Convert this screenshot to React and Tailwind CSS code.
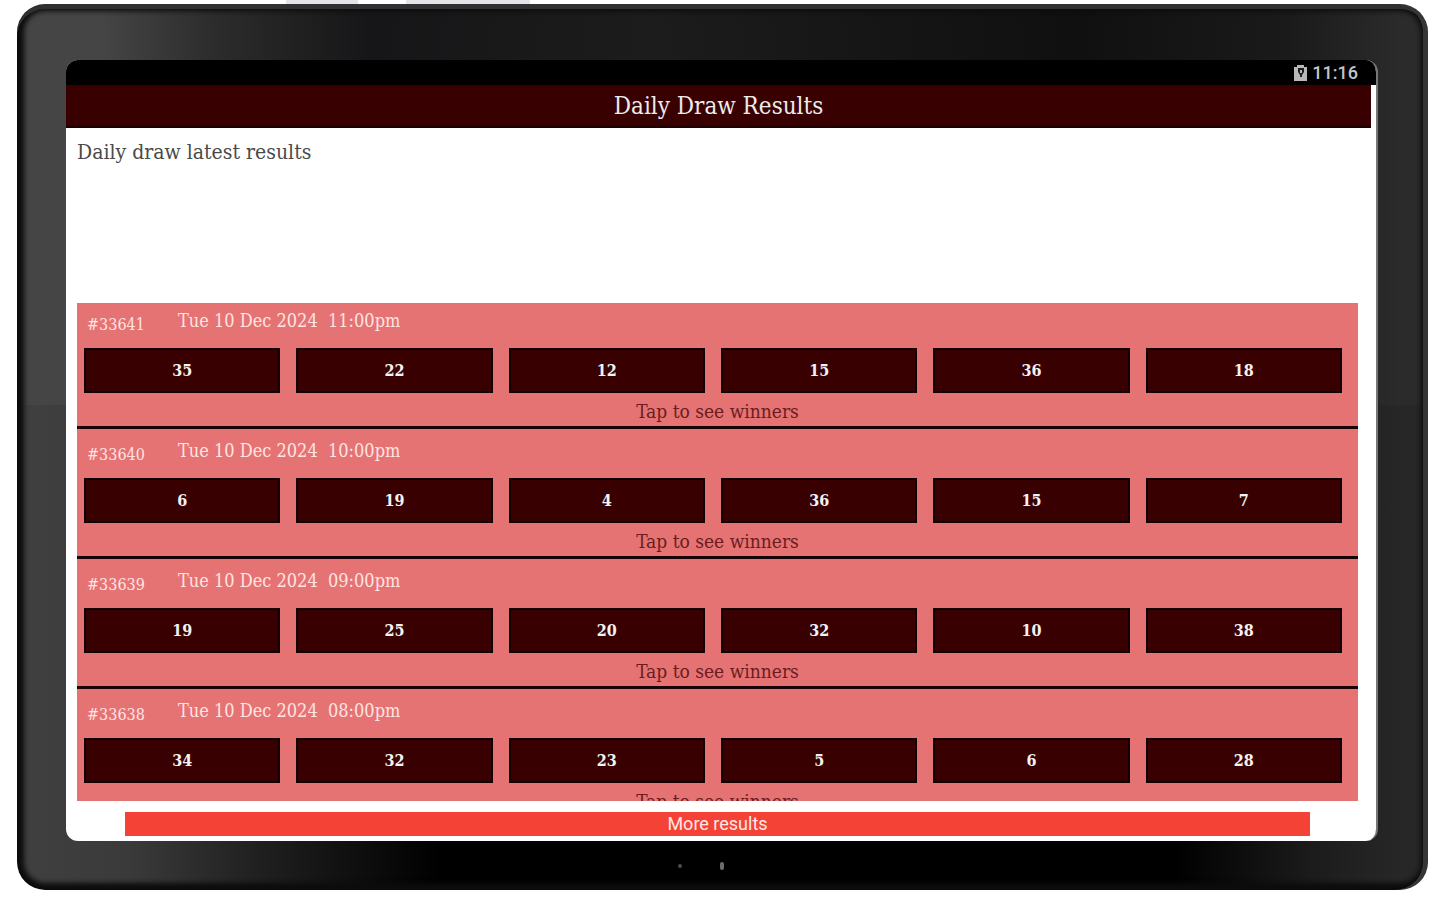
import { useState } from "react";

const draws = [
	{
		id: 33641,
		date: "Tue 10 Dec 2024",
		time: "11:00pm",
		numbers: [35, 22, 12, 15, 36, 18],
	},
	{
		id: 33640,
		date: "Tue 10 Dec 2024",
		time: "10:00pm",
		numbers: [6, 19, 4, 36, 15, 7],
	},
	{
		id: 33639,
		date: "Tue 10 Dec 2024",
		time: "09:00pm",
		numbers: [19, 25, 20, 32, 10, 38],
	},
	{
		id: 33638,
		date: "Tue 10 Dec 2024",
		time: "08:00pm",
		numbers: [34, 32, 23, 5, 6, 28],
	},
];

function BatteryIcon() {
	return (
		<svg width="13" height="16" viewBox="0 0 13 16" aria-hidden="true">
			<path d="M3 0h7v2h3v14H0V2h3z" fill="#b8b8b8" />
			<path d="M4 3h6v4L8 10v2H6v-2L4 7z" fill="#1c1c1c" />
			<path d="M6 5h2v3H6z" fill="#b8b8b8" />
		</svg>
	);
}

function StatusBar() {
	return (
		<div className="flex h-[25px] shrink-0 items-center justify-end gap-[5px] bg-black pr-[18px] text-[#c4c4c4]">
			<BatteryIcon />
			<span className="font-['Roboto',sans-serif] text-lg font-medium leading-6">
				11:16
			</span>
		</div>
	);
}

function DrawRow({ draw, open, onToggle }) {
	return (
		<li className="h-[130px] shrink-0 border-b-3 border-[#170406] first:-mt-1">
			<div className="flex h-[49px] items-start pl-[10px] pt-2 text-[#ffe4e2]">
				<span className="w-[91px] pt-1 text-base leading-7">#{draw.id}</span>
				<span className="whitespace-pre text-lg leading-7">
					{draw.date}
					{"  "}
					{draw.time}
				</span>
			</div>
			<div className="grid grid-cols-6 gap-4 pl-[7px] pr-4">
				{draw.numbers.map((number, i) => (
					<div
						key={i}
						className="flex h-[45px] items-center justify-center border-2 border-[#100000] bg-[#380000] text-base font-bold text-[#f2f2f2]"
					>
						{number}
					</div>
				))}
			</div>
			<button
				onClick={onToggle}
				aria-expanded={open}
				className="block h-[33px] w-full text-center text-[19px] leading-9 text-[#6b1c20]"
			>
				Tap to see winners
			</button>
		</li>
	);
}

function App() {
	const [openId, setOpenId] = useState(null);

	return (
		<div className="flex h-screen flex-col bg-white px-[17px] pb-[10px] font-['DejaVu_Serif_Condensed','DejaVu_Serif',serif]">
			{/* Hardware buttons */}
			<div className="flex h-1 shrink-0 gap-12 pl-[269px]">
				<span className="w-[72px] bg-[#e4e4e8]" />
				<span className="w-[124px] bg-[#e4e4e8]" />
			</div>

			{/* Tablet body */}
			<div className="flex min-h-0 flex-1 flex-col rounded-[28px] bg-[linear-gradient(90deg,#454545_0%,#454545_6%,#2c2c2c_14%,#161618_25%,#1c1c1c_45%,#101010_75%,#1a1a1a_90%,#2b2b2b_98%),linear-gradient(90deg,#404040_0%,#3a3a3a_8%,#202020_17%,#000_30%,#000_82%,#1c1c1c_92%,#272727_98%)] bg-[length:100%_401px,100%_100%] bg-no-repeat pl-[49px] pr-[50px] pt-14 shadow-[inset_-5px_0_0_0_#363636,inset_0_5px_0_0_#303032,inset_0_0_5px_7px_#0c0c0c]">
				<div className="flex min-h-0 flex-1 flex-col overflow-hidden rounded-xl border-r-2 border-[#77747a] bg-white">
					<StatusBar />
					<h1 className="mr-[5px] h-[43px] shrink-0 border-b-2 border-[#1c0000] bg-[#380000] text-center text-2xl leading-[43px] text-[#ececec]">
						Daily Draw Results
					</h1>

					<main className="flex min-h-0 flex-1 flex-col pl-[11px] pr-[18px]">
						<p className="h-[175px] shrink-0 pt-2 text-[21px] leading-8 text-[#4a4a4a]">
							Daily draw latest results
						</p>
						<ul className="flex min-h-0 flex-1 flex-col overflow-hidden bg-[#e57373]">
							{draws.map((draw) => (
								<DrawRow
									key={draw.id}
									draw={draw}
									open={openId === draw.id}
									onToggle={() =>
										setOpenId(openId === draw.id ? null : draw.id)
									}
								/>
							))}
						</ul>
						<button className="mx-12 mb-[5px] mt-[11px] h-6 shrink-0 bg-[#f44336] font-['Roboto',sans-serif] text-lg leading-6 text-[#ffe8e6]">
							More results
						</button>
					</main>
				</div>

				{/* Sensors under the screen */}
				<div className="flex h-[49px] shrink-0 items-center justify-center gap-[38px] pr-[42px]">
					<span className="h-1 w-1 rounded-full bg-[#4c4c50]" />
					<span className="h-2 w-1 rounded-full bg-[#6c6c70]" />
				</div>
			</div>
		</div>
	);
}

export default App;
